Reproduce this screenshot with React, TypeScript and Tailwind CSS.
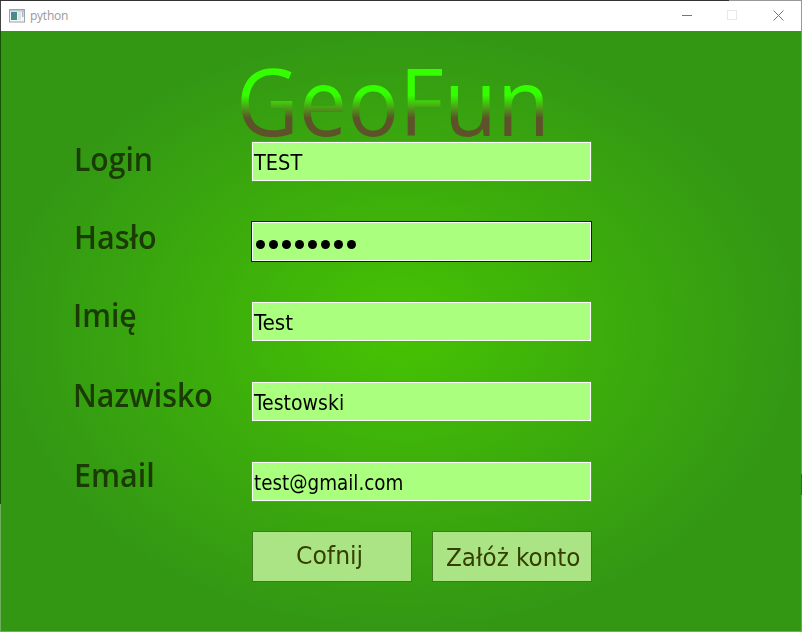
import { useLayoutEffect, useRef, useState } from 'react';

type FitProps = { text: string; width: number; className: string };

// Scales a line of text horizontally so that it takes exactly `width` pixels.
function FitText({ text, width, className }: FitProps) {
  const ref = useRef<HTMLSpanElement>(null);
  const [scale, setScale] = useState(1);
  useLayoutEffect(() => {
    if (ref.current) setScale(width / ref.current.offsetWidth);
  }, [width, text]);
  return (
    <span className="block" style={{ width }}>
      <span
        ref={ref}
        className={`inline-block origin-left align-top whitespace-nowrap ${className}`}
        style={{ transform: `scaleX(${scale})` }}
      >
        {text}
      </span>
    </span>
  );
}

const rows = [
  { label: 'Login', labelWidth: 79, pad: 'pl-[73px]', leading: 'leading-[36px]', value: 'TEST', valueWidth: 48 },
  { label: 'Hasło', labelWidth: 83, pad: 'pl-[73px]', leading: 'leading-[32px]', value: '', valueWidth: 0, focused: true },
  { label: 'Imię', labelWidth: 64, pad: 'pl-[72px]', leading: 'leading-[28px]', value: 'Test', valueWidth: 39.5 },
  { label: 'Nazwisko', labelWidth: 139.5, pad: 'pl-[72px]', leading: 'leading-[28px]', value: 'Testowski', valueWidth: 90 },
  { label: 'Email', labelWidth: 81, pad: 'pl-[73px]', leading: 'leading-[28px]', value: 'test@gmail.com', valueWidth: 149 },
];

const tahoma = "font-['DejaVu_Sans_Condensed','DejaVu_Sans',sans-serif]";

function TitleBar() {
  return (
    <header className="flex h-[30px] items-center bg-white">
      <svg className="ml-2 h-[14px] w-4" viewBox="0 0 16 14">
        <rect x="0.5" y="0.5" width="15" height="12.5" fill="#f4f6f7" stroke="#9aa4aa" />
        <rect x="1" y="1" width="14" height="1.5" fill="#bcc6ce" />
        <rect x="2" y="3" width="6" height="8" fill="#478d82" />
        <rect x="2" y="3" width="3" height="4" fill="#557fa6" />
        <rect x="9" y="3" width="3" height="8" fill="#dfe3e8" />
        <rect x="13" y="2" width="1.5" height="6" fill="#a9b6bf" />
      </svg>
      <span className="ml-[5px] font-['Open_Sans',sans-serif] text-[12px] leading-none tracking-[-0.25px] text-[#999999]">
        python
      </span>
      <svg className="mr-[17px] ml-auto h-[12px] w-[104px]" viewBox="0 0 104 12" fill="none">
        <path d="M2 5.5H12" stroke="#777" />
        <rect x="47.5" y="0.5" width="9" height="9" stroke="#e9e7eb" />
        <path d="M93.5 0.5L103.5 10.5M103.5 0.5L93.5 10.5" stroke="#777" />
      </svg>
    </header>
  );
}

export default function App() {
  return (
    <div className="flex h-[632px] w-[802px] flex-col overflow-hidden bg-[#339714]">
      <div className="flex h-px shrink-0">
        <div className="w-[729px] bg-[#333333]" />
        <div className="flex-1 bg-[#999999]" />
      </div>
      <div className="flex flex-1">
        <div className="flex w-px flex-col">
          <div className="h-[30px] bg-[#444444]" />
          <div className="h-[473px] bg-[#155504]" />
          <div className="flex-1 bg-[#72ae60]" />
        </div>
        <div className="flex w-[800px] flex-col">
          <TitleBar />
          <main className="h-[600px] bg-[radial-gradient(ellipse_400px_300px_at_400px_300px,#45c303_0%,#339714_100%)]">
            <h1 className="h-[110px] pt-7 pl-[235px]">
              <FitText
                text="GeoFun"
                width={314}
                className="bg-[linear-gradient(to_bottom,#33ff00_0px,#33ff00_36px,#5d5229_59px,#5d5229_100%)] bg-clip-text font-['Open_Sans',sans-serif] text-[93px] leading-[82px] font-normal text-transparent"
              />
            </h1>
            {rows.map((row) => (
              <div key={row.label} className="flex h-20">
                <div className={`w-[250px] ${row.pad}`}>
                  <FitText
                    text={row.label}
                    width={row.labelWidth}
                    className={`font-['Open_Sans',sans-serif] text-[32px] font-semibold text-[#1b3b05] ${row.leading}`}
                  />
                </div>
                <div
                  className={`flex h-[41px] w-[341px] border ${row.focused ? 'border-[#0b2800]' : 'border-[#7a8072]'}`}
                >
                  <div className="w-full border border-white bg-[#aaff7f] pl-px">
                    {row.focused ? (
                      <div className="flex gap-1 pt-[17px] pl-[2px]">
                        {Array.from({ length: 8 }, (_, i) => (
                          <span key={i} className="size-[9px] rounded-full bg-black" />
                        ))}
                      </div>
                    ) : (
                      <FitText
                        text={row.value}
                        width={row.valueWidth}
                        className={`${tahoma} text-[22px] leading-[39px] text-black`}
                      />
                    )}
                  </div>
                </div>
              </div>
            ))}
            <div className="-mt-[10px] flex gap-5 pl-[251px]">
              <button className="flex h-[51px] w-[160px] items-start border border-[#3f7a22] bg-[#aae485] pl-[43px] text-left text-[#353f00]">
                <FitText text="Cofnij" width={67} className={`${tahoma} text-[25px] leading-[48px]`} />
              </button>
              <button className="flex h-[51px] w-[160px] items-start border border-[#3f7a22] bg-[#aae485] pl-[13px] text-left text-[#353f00]">
                <FitText text="Załóż konto" width={134.5} className={`${tahoma} text-[25px] leading-[52px]`} />
              </button>
            </div>
          </main>
          <div className="h-px bg-[#72ae60]" />
        </div>
        <div className="flex w-px flex-col">
          <div className="h-[30px] bg-[#999999]" />
          <div className="h-[443px] bg-[#6dab5b]" />
          <div className="h-[21px] bg-[#078048]" />
          <div className="flex-1 bg-[#6dab5b]" />
        </div>
      </div>
    </div>
  );
}
